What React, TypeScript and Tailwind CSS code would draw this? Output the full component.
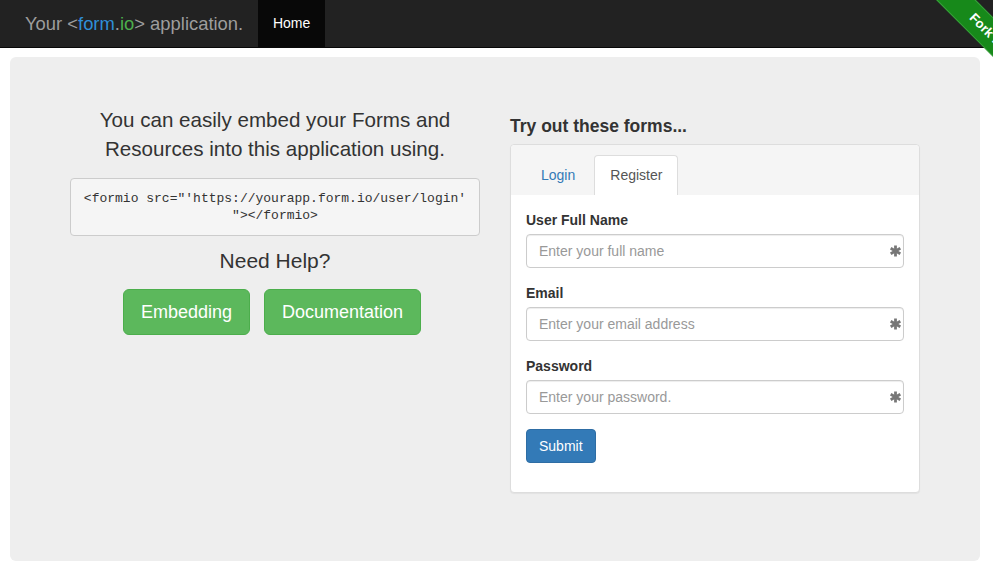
import type { FC } from 'react';

const font = { fontFamily: '"Liberation Sans", Arial, sans-serif' };

const Star: FC = () => (
    <svg width="13" height="13" viewBox="0 0 14 14" className="absolute right-[2px] top-1/2 -translate-y-1/2">
        <g stroke="#777" strokeWidth="3" strokeLinecap="butt">
            <line x1="7" y1="1" x2="7" y2="13" />
            <line x1="1.8" y1="4" x2="12.2" y2="10" />
            <line x1="1.8" y1="10" x2="12.2" y2="4" />
        </g>
    </svg>
);

const Field: FC<{ label: string; placeholder: string }> = ({ label, placeholder }) => (
    <div className="mb-[15px]">
        <label className="block text-[14px] leading-[20px] font-bold text-[#333] mb-[4px]">{label}</label>
        <div className="relative">
            <input
                className="block w-full h-[34px] px-[12px] text-[14px] border border-[#ccc] rounded-[4px] bg-white text-[#555] placeholder:text-[#999] shadow-[inset_0_1px_1px_rgba(0,0,0,0.075)] outline-none"
                placeholder={placeholder}
                style={font}
            />
            <Star />
        </div>
    </div>
);

const App: FC = () => {
    return (
        <div className="relative min-h-[572px] bg-white overflow-hidden" style={font}>
            {/* navbar */}
            <div className="h-[48px] bg-[#222] border-b border-[#080808] flex">
                <div className="pl-[25px] pr-[15px] flex items-center text-[18.4px] text-[#9d9d9d]">
                    Your &lt;<span className="text-[#2f8fd8]">form</span>.<span className="text-[#4cae4c]">io</span>&gt; application.
                </div>
                <div className="w-[67px] bg-[#080808] text-white text-[14px] flex items-center justify-center">Home</div>
            </div>

            {/* fork ribbon */}
            <div className="absolute top-0 right-0 w-[60px] h-[72px] overflow-hidden">
                <div className="absolute left-[-60px] top-[3px] w-[200px] h-[28px] rotate-45 bg-[#17891a] border-y border-[#3aa03d] text-white font-bold text-[13px] leading-[26px] pl-[98px] whitespace-nowrap">
                    Fork me on GitHub
                </div>
            </div>

            {/* jumbotron */}
            <div className="ml-[10px] mr-[13px] mt-[9px] h-[504px] bg-[#eee] rounded-[6px] px-[60px] grid grid-cols-2 gap-[30px]">
                <div className="pt-[48px] text-center">
                    <p className="text-[20.6px] leading-[29px] text-[#333]">
                        You can easily embed your Forms and<br />Resources into this application using.
                    </p>
                    <pre
                        className="mt-[15px] bg-[#f5f5f5] border border-[#ccc] rounded-[4px] px-[10px] pt-[11px] pb-[11px] text-[13px] leading-[17px] text-[#333] text-center whitespace-pre-wrap"
                        style={{ fontFamily: '"Liberation Mono", Menlo, monospace' }}
                    >
                        {`<formio src="'https://yourapp.form.io/user/login'\n"></formio>`}
                    </pre>
                    <p className="mt-[10px] text-[21px] leading-[29px] text-[#333]">Need Help?</p>
                    <div className="mt-[14px] pr-[6px] flex justify-center gap-[14px]">
                        <button className="h-[46px] px-[17px] text-[18px] text-white bg-[#5cb85c] border border-[#4cae4c] rounded-[6px]">Embedding</button>
                        <button className="h-[46px] px-[17px] text-[18px] text-white bg-[#5cb85c] border border-[#4cae4c] rounded-[6px]">Documentation</button>
                    </div>
                </div>

                <div className="pt-[58px]">
                    <h4 className="text-[17.5px] leading-[22px] font-semibold text-[#333]">Try out these forms...</h4>
                    <div className="mt-[7px] bg-white border border-[#ddd] rounded-[4px] shadow-[0_1px_1px_rgba(0,0,0,0.05)]">
                        <div className="bg-[#f5f5f5] rounded-t-[4px] px-[15px] pt-[10px] flex h-[50px]">
                            <div className="px-[15px] flex items-center text-[14px] text-[#337ab7]">Login</div>
                            <div className="ml-[4px] px-[15px] flex items-center text-[14px] text-[#555] bg-white border border-b-0 border-[#ddd] rounded-t-[4px]">Register</div>
                        </div>
                        <div className="px-[15px] pt-[15px] pb-[29px]">
                            <Field label="User Full Name" placeholder="Enter your full name" />
                            <Field label="Email" placeholder="Enter your email address" />
                            <Field label="Password" placeholder="Enter your password." />
                            <button className="h-[34px] px-[12px] text-[14px] text-white bg-[#337ab7] border border-[#2e6da4] rounded-[4px]">Submit</button>
                        </div>
                    </div>
                </div>
            </div>
        </div>
    );
};

export default App;
